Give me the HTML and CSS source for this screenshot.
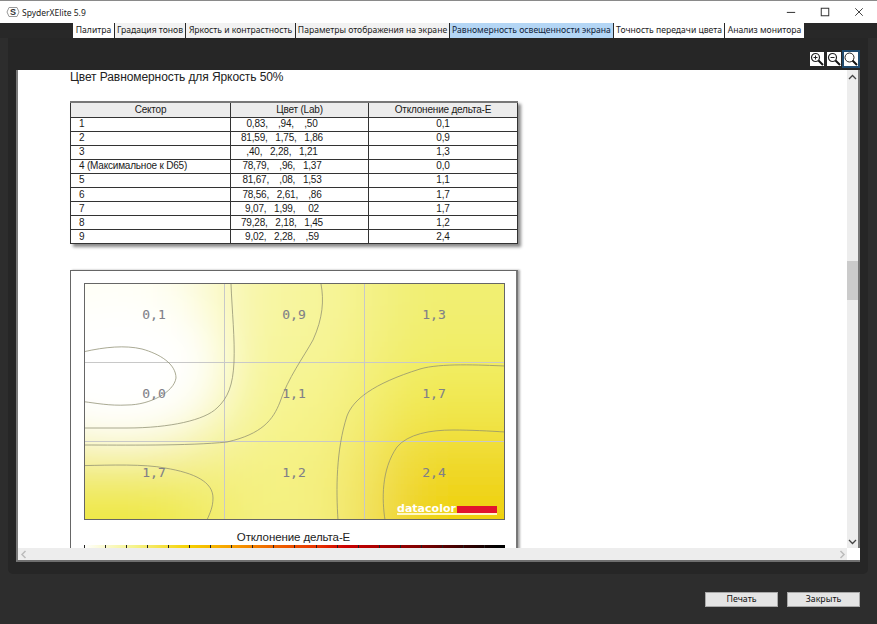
FILE: index.html
```html
<!DOCTYPE html>
<html lang="ru">
<head>
<meta charset="utf-8">
<title>SpyderXElite 5.9</title>
<link rel="stylesheet" href="styles.css">
</head>
<body>
<div class="window">
  <header class="titlebar">
    <svg class="app-icon" width="14" height="14" viewBox="0 0 14 14"><path d="M3 2.500h8l2 4.500-2 4.500H3L1 7z" fill="#fff" stroke="#999" stroke-width="1"/><text x="7" y="10" text-anchor="middle" class="app-s">S</text></svg>
    <span class="app-title">SpyderXElite 5.9</span>
    <div class="win-controls">
      <svg width="10" height="10" viewBox="0 0 12 12"><path d="M1 6.500h10" stroke="#333" stroke-width="1.200"/></svg>
      <svg width="10" height="10" viewBox="0 0 12 12"><rect x="1.500" y="1.500" width="9" height="9" fill="none" stroke="#333" stroke-width="1.200"/></svg>
      <svg width="10" height="10" viewBox="0 0 12 12"><path d="M1.500 1.500l9 9M10.500 1.500l-9 9" stroke="#333" fill="none" stroke-width="1.100"/></svg>
    </div>
  </header>
  <nav class="tabs">
    <span class="tab t1">Палитра</span>
    <span class="tab t2">Градация тонов</span>
    <span class="tab t3">Яркость и контрастность</span>
    <span class="tab t4">Параметры отображения на экране</span>
    <span class="tab t5 active">Равномерность освещенности экрана</span>
    <span class="tab t6">Точность передачи цвета</span>
    <span class="tab t7">Анализ монитора</span>
  </nav>
  <main class="panel">
    <div class="zoom-tools">
      <span class="zoom-btn"><svg width="14" height="14" viewBox="0 0 14 14"><circle cx="5.500" cy="5.500" r="4" fill="none" stroke="#222" stroke-width="1.200"/><path d="M8.500 8.500l4.500 4.500" stroke="#111" stroke-width="2"/><path d="M3.500 5.500h4M5.500 3.500v4" stroke="#222"/></svg></span>
      <span class="zoom-btn"><svg width="14" height="14" viewBox="0 0 14 14"><circle cx="5.500" cy="5.500" r="4" fill="none" stroke="#222" stroke-width="1.200"/><path d="M8.500 8.500l4.500 4.500" stroke="#111" stroke-width="2"/><path d="M3.500 5.500h4" stroke="#222"/></svg></span>
      <span class="zoom-btn current"><svg width="14" height="14" viewBox="0 0 14 14"><circle cx="5.500" cy="5.500" r="4.500" fill="none" stroke="#222" stroke-width="1"/><path d="M8.500 8.500l4.500 4.500" stroke="#111" stroke-width="2"/></svg></span>
    </div>
    <div class="viewer">
      <div class="viewer-main">
        <div class="doc">
          <h1 class="doc-title">Цвет Равномерность для Яркость 50%</h1>
          <table class="data">
            <thead>
              <tr><th class="c1">Сектор</th><th class="c2">Цвет (Lab)</th><th class="c3">Отклонение дельта-Е</th></tr>
            </thead>
            <tbody>
              <tr><td>1</td><td class="lab">0,83,&nbsp;&nbsp;&nbsp;&nbsp;,94,&nbsp;&nbsp;&nbsp;&nbsp;,50</td><td class="num">0,1</td></tr>
              <tr><td>2</td><td class="lab">81,59,&nbsp;&nbsp;&nbsp;1,75,&nbsp;&nbsp;&nbsp;1,86</td><td class="num">0,9</td></tr>
              <tr><td>3</td><td class="lab">,40,&nbsp;&nbsp;&nbsp;2,28,&nbsp;&nbsp;&nbsp;1,21</td><td class="num">1,3</td></tr>
              <tr><td>4 (Максимальное к D65)</td><td class="lab">78,79,&nbsp;&nbsp;&nbsp;&nbsp;,96,&nbsp;&nbsp;&nbsp;1,37</td><td class="num">0,0</td></tr>
              <tr><td>5</td><td class="lab">81,67,&nbsp;&nbsp;&nbsp;&nbsp;,08,&nbsp;&nbsp;&nbsp;1,53</td><td class="num">1,1</td></tr>
              <tr><td>6</td><td class="lab">78,56,&nbsp;&nbsp;&nbsp;2,61,&nbsp;&nbsp;&nbsp;&nbsp;,86</td><td class="num">1,7</td></tr>
              <tr><td>7</td><td class="lab">9,07,&nbsp;&nbsp;&nbsp;1,99,&nbsp;&nbsp;&nbsp;&nbsp;&nbsp;02</td><td class="num">1,7</td></tr>
              <tr><td>8</td><td class="lab">79,28,&nbsp;&nbsp;&nbsp;2,18,&nbsp;&nbsp;&nbsp;1,45</td><td class="num">1,2</td></tr>
              <tr><td>9</td><td class="lab">9,02,&nbsp;&nbsp;&nbsp;2,28,&nbsp;&nbsp;&nbsp;&nbsp;,59</td><td class="num">2,4</td></tr>
            </tbody>
          </table>
          <section class="chart-card">
            <svg class="heatmap" width="423" height="238" viewBox="83 283 423 238">
              <defs>
                <filter id="soft" x="-30%" y="-30%" width="160%" height="160%"><feGaussianBlur stdDeviation="40"/></filter>
                <filter id="softer" x="-60%" y="-60%" width="220%" height="220%"><feGaussianBlur stdDeviation="26"/></filter>
                <clipPath id="plot"><rect x="84" y="284" width="421" height="236"/></clipPath>
              </defs>
              <g clip-path="url(#plot)">
                <rect x="84" y="284" width="421" height="236" fill="#f6f38f"/>
                <g filter="url(#soft)">
                  <rect x="-100" y="150" width="310" height="212" fill="#fffff4"/>
                  <rect x="210" y="150" width="154" height="212" fill="#f7f59f"/>
                  <rect x="364" y="150" width="300" height="212" fill="#f1ef72"/>
                  <rect x="-100" y="362" width="310" height="80" fill="#ffffff"/>
                  <rect x="210" y="362" width="154" height="80" fill="#f6f48f"/>
                  <rect x="364" y="362" width="300" height="80" fill="#f1ea50"/>
                  <rect x="-100" y="442" width="310" height="200" fill="#efe840"/>
                  <rect x="210" y="442" width="154" height="200" fill="#f4f182"/>
                  <rect x="364" y="442" width="300" height="200" fill="#efd208"/>
                </g>
                <ellipse cx="120" cy="365" rx="95" ry="65" fill="#fff" filter="url(#softer)"/>
                <path class="grid" d="M224.500 284V520M364.500 284V520M84 362.500H505M84 441.500H505"/>
                <path class="iso" d="M84 351.700C105 347 125 345 142 349C160 354 176 364 176 378C174 392 150 405 127 405C110 406 95 403 84 401.700"/>
                <path class="iso" d="M231 284C232 310 235 340 234 362C233 385 228 398 217 408C205 420 170 428 127 428H84"/>
                <path class="iso" d="M321 284C324 300 323 318 313 340C303 358 288 378 280 402C273 420 262 434 227 442C190 446 120 445 84 445"/>
                <path class="iso" d="M84 465.600C110 465 145 464 165 468C195 473 213 482 213 498C213 507 210 513 207 520"/>
                <path class="iso" d="M338 520C336 490 336 450 347 416C353 400 372 384 420 369C440 363 480 365 505 366"/>
                <path class="iso" d="M385 520C382 500 381 470 397 447C408 434 430 430 453 430C470 430 490 431 505 432"/>
                <g class="val">
                  <text x="154" y="319">0,1</text><text x="294" y="319">0,9</text><text x="434" y="319">1,3</text>
                  <text x="154" y="398">0,0</text><text x="294" y="398">1,1</text><text x="434" y="398">1,7</text>
                  <text x="154" y="477">1,7</text><text x="294" y="477">1,2</text><text x="434" y="477">2,4</text>
                </g>
                <text class="brand" x="397" y="512" textLength="59" lengthAdjust="spacingAndGlyphs">datacolor</text>
                <rect x="457" y="506" width="40" height="7" fill="#e2142d"/>
                <rect x="397" y="513" width="100" height="2" fill="#fff9c8"/>
              </g>
              <rect x="84.500" y="283.500" width="420" height="236" fill="none" stroke="#666"/>
            </svg>
            <div class="legend-title">Отклонение дельта-Е</div>
            <div class="legend-bar"></div>
          </section>
        </div>
        <div class="hscroll">
          <svg width="8" height="9" viewBox="0 0 8 9"><path d="M5.500 1L2 4.500 5.500 8" fill="none" stroke="#bbb" stroke-width="1.500"/></svg>
          <svg width="8" height="9" viewBox="0 0 8 9"><path d="M2.500 1L6 4.500 2.500 8" fill="none" stroke="#bbb" stroke-width="1.500"/></svg>
        </div>
      </div>
      <div class="vscroll">
        <svg class="arrow" width="9" height="7" viewBox="0 0 9 7"><path d="M1 5l3.500-3.500L8 5" fill="none" stroke="#444" stroke-width="1.300"/></svg>
        <div class="thumb-space"></div>
        <div class="thumb"></div>
        <div class="track-fill"></div>
        <svg class="arrow" width="9" height="7" viewBox="0 0 9 7"><path d="M1 2l3.500 3.500L8 2" fill="none" stroke="#444" stroke-width="1.300"/></svg>
        <div class="corner"></div>
      </div>
    </div>
  </main>
  <footer class="actions">
    <button class="btn" type="button">Печать</button>
    <button class="btn" type="button">Закрыть</button>
  </footer>
</div>
</body>
</html>
```
FILE: styles.css
```css
* { box-sizing: border-box; }
html, body { margin: 0; padding: 0; height: 100%; overflow: hidden; }
body { background: #2d2d2d; font-family: "Liberation Sans", Arial, sans-serif; }
.window { width: 877px; height: 624px; display: flex; flex-direction: column; background: #2d2d2d; border-top: 1px solid #8a8a8a; }
.titlebar { height: 22px; background: #fff; display: flex; align-items: center; padding: 0 0 0 6px; flex: none; }
.app-icon { margin-right: 2px; }
.app-s { font: bold 9px "Liberation Sans", sans-serif; fill: #333; }
.app-title { font: 8.500px "Noto Sans", sans-serif; color: #222; }
.win-controls { margin-left: auto; display: flex; gap: 24px; padding-right: 13px; align-items: center; }
.win-controls svg { display: block; }
.tabs { height: 15px; flex: none; display: flex; background: #282828; padding-left: 73px; gap: 1px; }
.tab { height: 15px; background: #f2f2f2; font: 8.600px/14px "Noto Sans", sans-serif; color: #1c1c1c; text-align: center; white-space: nowrap; }
.tab.t1 { width: 41px; background: #fff; }
.tab.t2 { width: 70px; }
.tab.t3 { width: 109px; }
.tab.t4 { width: 153px; }
.tab.t5 { width: 163px; }
.tab.t6 { width: 110px; background: #fff; }
.tab.t7 { width: 79px; background: #fff; }
.tab.active { background: #b4d6f5; color: #10233a; }
.panel { margin: 0 9px 0 8px; height: 536px; flex: none; background: #262626; border-radius: 0 0 5px 5px; padding: 0 8px; display: flex; flex-direction: column; }
.zoom-tools { height: 32px; flex: none; display: flex; justify-content: flex-end; align-items: flex-end; gap: 3px; padding: 0 2px 4px 0; }
.zoom-btn { width: 14px; height: 14px; background: #fff; display: block; }
.zoom-btn svg { display: block; }
.zoom-btn.current { outline: 2px solid #1f4a6e; }
.viewer { height: 492px; flex: none; display: flex; background: #fff; border-left: 2px solid #7a7a7a; border-right: 2px solid #777; border-bottom: 2px solid #6f6f6f; }
.viewer-main { flex: 1; min-width: 0; display: flex; flex-direction: column; }
.doc { flex: 1; overflow: hidden; padding-left: 52px; background: #fff; min-height: 0; }
.doc-title { margin: 0; font: 400 12px/14px "Liberation Sans", sans-serif; letter-spacing: -.09px; color: #222; height: 31px; }
.data { border-collapse: collapse; table-layout: fixed; width: 447px; font-size: 10px; letter-spacing: -.2px; color: #1a1a1a; box-shadow: 3px 3px 3px #8a8a8a; }
.data th { background: #ececec; font-weight: 400; height: 15px; padding: 0; line-height: 12px; border: 1px solid #333; border-top: 2px solid #777; }
.data td { height: 14.100px; padding: 0 0 0 8px; line-height: 12px; border: 1px solid #333; white-space: nowrap; }
.data .c1 { width: 160px; }
.data .c2 { width: 138px; }
.data .c3 { width: 149px; }
.data td.lab { text-align: center; padding: 0 35px 0 0; }
.data td.num { text-align: center; padding: 0; }
.chart-card { margin-top: 26px; width: 448px; height: 300px; border: 1px solid #666; border-right: 2px solid #777; background: #fff; padding: 12px 12px 0 12px; box-shadow: 2px 0 2px #aaa; }
.heatmap { display: block; }
.grid { fill: none; stroke: #c8c8c8; stroke-width: 1; }
.iso { fill: none; stroke: #8e8e70; stroke-opacity: .75; stroke-width: 1; }
.val text { font: 13px "DejaVu Sans Mono", monospace; fill: #808088; text-anchor: middle; stroke: #808088; stroke-width: .1px; }
.brand { font: bold 11px "DejaVu Sans", sans-serif; fill: #fff; }
.legend-title { text-align: center; font-size: 11.500px; letter-spacing: -.1px; line-height: 14px; color: #222; margin-top: 9px; }
.legend-bar { height: 4px; margin-top: 1px; width: 421px; margin-left: 1px;
  background:
    repeating-linear-gradient(90deg, #222 0 1px, transparent 1px 21.050px) 0 0 / 100% 3px no-repeat,
    linear-gradient(90deg, #ffffff 0%, #f5f38a 12%, #f5d000 25%, #f7a000 35%, #ef6a00 44%, #e83000 56%, #cc0000 62%, #800000 80%, #000 98%); }
.hscroll { height: 12px; flex: none; background: #ededed; display: flex; justify-content: space-between; align-items: center; padding: 0 1px 0 2px; }
.hscroll svg { display: block; }
.vscroll { width: 11px; flex: none; background: #ededed; display: flex; flex-direction: column; align-items: center; }
.arrow { flex: none; margin: 4px 0 3px; }
.thumb-space { height: 177px; flex: none; }
.thumb { width: 11px; height: 39px; background: #cbcbcb; flex: none; }
.track-fill { flex: 1; }
.corner { height: 12px; width: 13px; margin-right: -2px; background: #fff; flex: none; align-self: flex-end; }
.actions { flex: 1; display: flex; justify-content: flex-end; align-items: flex-start; gap: 9px; padding: 18px 17px 0 0; }
.btn { width: 73px; height: 15px; padding: 0; background: #e4e4e4; border: 1px solid #a8a8a8; font: 8.800px/13px "Noto Sans", sans-serif; color: #111; }
```
